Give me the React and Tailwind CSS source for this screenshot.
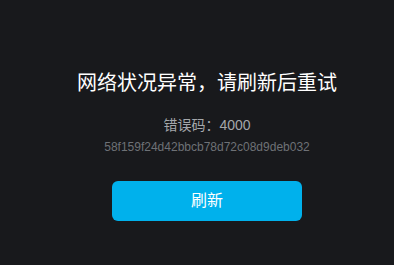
import React from 'react';

export default function App() {
  return (
    <div
      className="w-[394px] h-[265px] bg-[#18191c] flex flex-col items-center pl-5 pt-[70px]"
      style={{ fontFamily: '"Liberation Sans", Arial, "Noto Sans CJK SC", sans-serif' }}
    >
      <div className="text-[20px] leading-[26px] text-white">网络状况异常，请刷新后重试</div>
      <div className="mt-[20px] text-[14px] leading-[18px] text-[#a4a7ab]">错误码：4000</div>
      <div className="mt-[5px] text-[12px] leading-[16px] text-[#6e7176]">58f159f24d42bbcb78d72c08d9deb032</div>
      <button className="mt-[26px] w-[190px] h-[40px] rounded-md bg-[#00b1ec] text-white text-[16px]">
        刷新
      </button>
    </div>
  );
}
